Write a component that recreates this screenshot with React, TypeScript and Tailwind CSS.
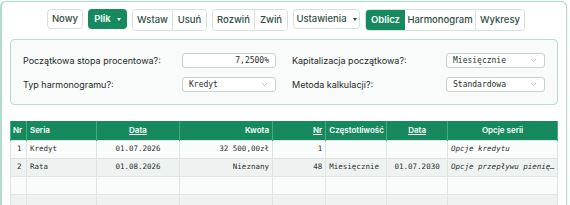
import { ChevronDown } from 'lucide-react';

const SANS = { fontFamily: 'Inter, "Noto Sans", sans-serif' };
const MONO = { fontFamily: '"DejaVu Sans Mono", "Liberation Mono", monospace' };

function Caret() {
  return <span className="ml-1.5 inline-block h-0 w-0 border-x-[2.5px] border-t-[3px] border-x-transparent border-t-current" />;
}

function Btn({ children, active, caret, cls = '' }: { children: React.ReactNode; active?: boolean; caret?: boolean; cls?: string }) {
  return (
    <div
      className={`flex h-5 items-center justify-center text-[9.5px] ${
        active ? 'bg-[#168a5e] font-semibold text-white' : 'bg-white font-medium text-[#2f4f45]'
      } ${cls}`}
    >
      {children}
      {caret && <Caret />}
    </div>
  );
}

function Field({ label, value, select, w }: { label: string; value: string; select?: boolean; w: string }) {
  return (
    <div className="flex h-[15px] items-center">
      <span className="text-[9px] text-[#1f2a27]">{label}</span>
      <div
        className={`ml-auto flex h-[15px] ${w} items-center rounded-[3px] border border-[#c6d3ce] bg-white px-1.5 text-[8px] text-[#2a2f2e]`}
        style={MONO}
      >
        {select ? (
          <>
            <span>{value}</span>
            <ChevronDown className="ml-auto text-[#8a9490]" size={9} strokeWidth={1.5} />
          </>
        ) : (
          <span className="ml-auto">{value}</span>
        )}
      </div>
    </div>
  );
}

const ROWS = [
  ['1', 'Kredyt', '01.07.2026', '32 500,00zł', '1', '', '', 'Opcje kredytu'],
  ['2', 'Rata', '01.08.2026', 'Nieznany', '48', 'Miesięcznie', '01.07.2030', 'Opcje przepływu pienię…'],
  ['', '', '', '', '', '', '', ''],
  ['', '', '', '', '', '', '', ''],
];

const COLS = [
  { w: 'w-[16px]', h: 'Nr', ha: 'text-left pl-[2px]', ba: 'text-left pl-[6px]' },
  { w: 'w-[71px]', h: 'Seria', ha: 'text-left pl-[3px]', ba: 'text-left pl-[3px]' },
  { w: 'w-[83px]', h: 'Data', ha: 'text-center underline', ba: 'text-center' },
  { w: 'w-[94px]', h: 'Kwota', ha: 'text-right pr-[3px]', ba: 'text-right pr-[3px]' },
  { w: 'w-[54px]', h: 'Nr', ha: 'text-right pr-[3px] underline', ba: 'text-right pr-[3px]' },
  { w: 'w-[61px]', h: 'Częstotliwość', ha: 'text-left pl-[3px]', ba: 'text-left pl-[3px]' },
  { w: 'w-[61px]', h: 'Data', ha: 'text-center underline', ba: 'text-center' },
  { w: 'w-[110px]', h: 'Opcje serii', ha: 'text-center', ba: 'text-left pl-[3px] italic' },
];

export default function App() {
  return (
    <div className="h-[205px] w-[570px] overflow-hidden bg-white" style={SANS}>
      <div className="mr-[3px] mt-px h-[220px] rounded-md border border-l-2 border-[#b3dccd] bg-white shadow-[0_0_2px_rgba(60,150,120,0.25)]">
        <div className="flex justify-center gap-[5px] pl-[4px] pt-[7px]">
          <Btn cls="w-[36px] rounded border border-[#d3e2dc]">Nowy</Btn>
          <Btn active caret cls="w-[39px] rounded">Plik</Btn>
          <div className="flex overflow-hidden rounded border border-[#d3e2dc]">
            <Btn cls="w-[40px] border-r border-[#d3e2dc]">Wstaw</Btn>
            <Btn cls="w-[33px]">Usuń</Btn>
          </div>
          <div className="flex overflow-hidden rounded border border-[#d3e2dc]">
            <Btn cls="w-[42px] border-r border-[#d3e2dc]">Rozwiń</Btn>
            <Btn cls="w-[32px]">Zwiń</Btn>
          </div>
          <Btn caret cls="w-[67px] rounded border border-[#d3e2dc]">Ustawienia</Btn>
          <div className="flex overflow-hidden rounded border border-[#d3e2dc]">
            <Btn active cls="w-[39px]">Oblicz</Btn>
            <Btn cls="w-[71px] border-r border-[#d3e2dc]">Harmonogram</Btn>
            <Btn cls="w-[48px]">Wykresy</Btn>
          </div>
        </div>

        <div className="mx-2 mt-[8px] grid h-[66px] grid-cols-2 content-start gap-x-4 gap-y-[9px] rounded border border-[#b9dccf] bg-[#f8fbfa] px-[12px] pt-[13px]">
          <Field label="Początkowa stopa procentowa?:" value="7,2500%" w="w-[94px]" />
          <Field label="Kapitalizacja początkowa?:" value="Miesięcznie" select w="w-[99px]" />
          <Field label="Typ harmonogramu?:" value="Kredyt" select w="w-[94px]" />
          <Field label="Metoda kalkulacji?:" value="Standardowa" select w="w-[99px]" />
        </div>

        <table className="mx-2 mt-[16px] table-fixed border-collapse">
          <thead>
            <tr className="h-[19px] bg-[#168a5e] text-[8px] text-white">
              {COLS.map((c, i) => (
                <th key={i} className={`${c.w} border-x border-[#49a983] ${c.ha} font-semibold whitespace-nowrap`}>
                  {c.h}
                </th>
              ))}
            </tr>
          </thead>
          <tbody style={MONO} className="text-[7.5px] text-[#2b2f2e]">
            {ROWS.map((r, ri) => (
              <tr key={ri} className={`h-[18px] ${ri % 2 ? 'bg-[#eef3f1]' : 'bg-[#fafbfb]'}`}>
                {r.map((v, ci) => (
                  <td key={ci} className={`border border-[#dce5e1] ${COLS[ci].ba} truncate`}>
                    {v}
                  </td>
                ))}
              </tr>
            ))}
          </tbody>
        </table>
      </div>
    </div>
  );
}
